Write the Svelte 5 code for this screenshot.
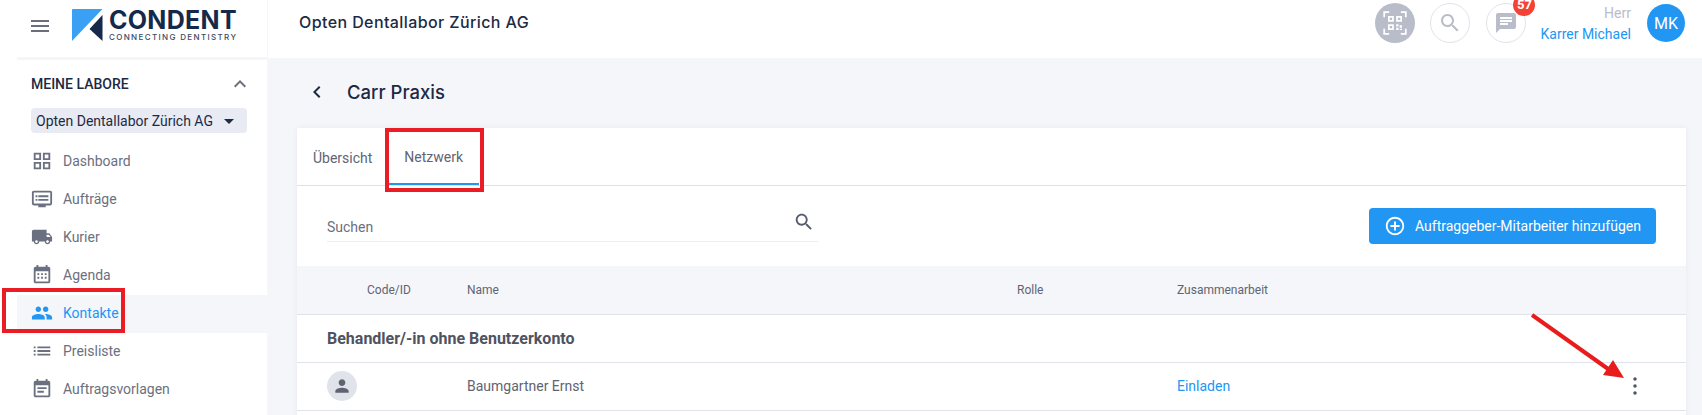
<script>
	const icons = {
		menu: 'M3 18h18v-2H3v2zm0-5h18v-2H3v2zm0-7v2h18V6H3z',
		dashboard: 'M3 3v8h8V3H3zm6 6H5V5h4v4zm-6 4v8h8v-8H3zm6 6H5v-4h4v4zm4-16v8h8V3h-8zm6 6h-4V5h4v4zm-6 4v8h8v-8h-8zm6 6h-4v-4h4v4z',
		orders: 'M21 3H3c-1.1 0-2 .9-2 2v12c0 1.1.9 2 2 2h5v2h8v-2h5c1.1 0 2-.9 2-2V5c0-1.1-.9-2-2-2zm0 14H3V5h18v12zM19 8H8v2h11V8zm0 4H8v2h11v-2zM7 8H5v2h2V8zm0 4H5v2h2v-2z',
		truck: 'M20 8h-3V4H3c-1.1 0-2 .9-2 2v11h2c0 1.66 1.34 3 3 3s3-1.34 3-3h6c0 1.66 1.34 3 3 3s3-1.34 3-3h2v-5l-3-4zM6 18.5c-.83 0-1.5-.67-1.5-1.5s.67-1.5 1.5-1.5 1.5.67 1.5 1.5-.67 1.5-1.5 1.5zm13.5-9l1.96 2.5H17V9.5h2.5zm-1.5 9c-.83 0-1.5-.67-1.5-1.5s.67-1.5 1.5-1.5 1.5.67 1.5 1.5-.67 1.5-1.5 1.5z',
		agenda: 'M19 3h-1V1h-2v2H8V1H6v2H5c-1.1 0-2 .9-2 2v14c0 1.1.9 2 2 2h14c1.1 0 2-.9 2-2V5c0-1.1-.9-2-2-2zm0 16H5V8h14v11zM7 10h2v2H7zm4 0h2v2h-2zm4 0h2v2h-2zM7 14h2v2H7zm4 0h2v2h-2zm4 0h2v2h-2z',
		people: 'M16 11c1.66 0 2.99-1.34 2.99-3S17.66 5 16 5c-1.66 0-3 1.34-3 3s1.34 3 3 3zm-8 0c1.66 0 2.99-1.34 2.99-3S9.66 5 8 5C6.34 5 5 6.34 5 8s1.34 3 3 3zm0 2c-2.33 0-7 1.17-7 3.5V19h14v-2.5c0-2.33-4.67-3.5-7-3.5zm8 0c-.29 0-.62.02-.97.05 1.16.84 1.97 1.97 1.97 3.45V19h6v-2.5c0-2.33-4.67-3.5-7-3.5z',
		list: 'M3 13h2v-2H3v2zm0 4h2v-2H3v2zm0-8h2V7H3v2zm4 4h14v-2H7v2zm0 4h14v-2H7v2zM7 7v2h14V7H7z',
		note: 'M17 10H7v2h10v-2zm2-7h-1V1h-2v2H8V1H6v2H5c-1.11 0-1.99.9-1.99 2L3 19c0 1.1.89 2 2 2h14c1.1 0 2-.9 2-2V5c0-1.1-.9-2-2-2zm0 16H5V8h14v11zm-5-5H7v2h7v-2z',
		search: 'M15.5 14h-.79l-.28-.27C15.41 12.59 16 11.11 16 9.5 16 5.91 13.09 3 9.5 3S3 5.91 3 9.5 5.91 16 9.5 16c1.61 0 3.09-.59 4.23-1.57l.27.28v.79l5 4.99L20.49 19l-4.99-5zm-6 0C7.01 14 5 11.99 5 9.5S7.01 5 9.5 5 14 7.01 14 9.5 11.99 14 9.5 14z',
		chat: 'M20 2H4c-1.1 0-1.99.9-1.99 2L2 22l4-4h14c1.1 0 2-.9 2-2V4c0-1.1-.9-2-2-2zM6 9h12v2H6V9zm8 5H6v-2h8v2zm4-6H6V6h12v2z',
		person: 'M12 12c2.21 0 4-1.79 4-4s-1.79-4-4-4-4 1.79-4 4 1.79 4 4 4zm0 2c-2.67 0-8 1.34-8 4v2h16v-2c0-2.66-5.33-4-8-4z',
		more: 'M12 3.25a1.75 1.75 0 1 0 0 3.5 1.75 1.75 0 0 0 0-3.5zm0 7a1.75 1.75 0 1 0 0 3.5 1.75 1.75 0 0 0 0-3.5zm0 7a1.75 1.75 0 1 0 0 3.5 1.75 1.75 0 0 0 0-3.5z',
		add: 'M13 7h-2v4H7v2h4v4h2v-4h4v-2h-4V7zm-1-5C6.48 2 2 6.48 2 12s4.48 10 10 10 10-4.48 10-10S17.52 2 12 2zm0 18c-4.41 0-8-3.59-8-8s3.59-8 8-8 8 3.59 8 8-3.59 8-8 8z',
		up: 'M12 8l-6 6 1.41 1.41L12 10.83l4.59 4.58L18 14z',
		back: 'M15.41 7.41L14 6l-6 6 6 6 1.41-1.41L10.83 12z',
		drop: 'M7 10l5 5 5-5z',
		qr: 'M2 2h5v1.500H3.500V7H2zm15 0h5v5h-1.500V3.500H17zM2 17h1.500v3.500H7V22H2zm18.500 0H22v5h-5v-1.500h3.500zM6 6h5v5H6zm1.500 1.500v2h2v-2zM13 6h5v5h-5zm1.500 1.500v2h2v-2zM6 13h5v5H6zm1.500 1.500v2h2v-2zM13 13h2v2h-2zm3 1h2v2h-2zm-3 2h2v2h-2zm3 1h2v1h-2z'
	};

	const nav = [
		{ label: 'Dashboard', icon: 'dashboard' },
		{ label: 'Aufträge', icon: 'orders' },
		{ label: 'Kurier', icon: 'truck' },
		{ label: 'Agenda', icon: 'agenda' },
		{ label: 'Kontakte', icon: 'people', active: true },
		{ label: 'Preisliste', icon: 'list' },
		{ label: 'Auftragsvorlagen', icon: 'note' }
	];
</script>

{#snippet icon(name, size)}
	<svg class="icon" width={size} height={size} viewBox="0 0 24 24" fill="currentColor"><path d={icons[name]} /></svg>
{/snippet}

<div class="page">
	<aside class="sidebar">
		<div class="brand">
			<span class="burger">{@render icon('menu', 24)}</span>
			<svg class="mark" width="31" height="33" viewBox="0 0 31 33">
				<path d="M1 0H30.500L0 32V1Q0 0 1 0Z" fill="#3aa0f3" />
				<path d="M30.500 6V32L17.500 20Z" fill="#15294a" />
			</svg>
			<div class="wordmark">
				<strong>CONDENT</strong>
				<small>CONNECTING DENTISTRY</small>
			</div>
		</div>

		<div class="labs">
			<div class="labs-head">
				<span>MEINE LABORE</span>
				{@render icon('up', 24)}
			</div>
			<div class="lab-select">
				<span>Opten Dentallabor Zürich AG</span>
				{@render icon('drop', 24)}
			</div>
		</div>

		<nav>
			{#each nav as item}
				<div class="nav-item" class:active={item.active}>
					{@render icon(item.icon, 22)}
					<span>{item.label}</span>
				</div>
			{/each}
		</nav>
	</aside>

	<div class="main">
		<header class="topbar">
			<span class="company">Opten Dentallabor Zürich AG</span>
			<div class="actions">
				<span class="round qr">{@render icon('qr', 28)}</span>
				<span class="round find">{@render icon('search', 24)}</span>
				<span class="round chat">
					{@render icon('chat', 24)}
					<b class="badge">57</b>
				</span>
				<div class="user">
					<span>Herr</span>
					<span class="user-name">Karrer Michael</span>
				</div>
				<span class="avatar">MK</span>
			</div>
		</header>

		<section class="content">
			<div class="title-row">
				<span class="back">{@render icon('back', 24)}</span>
				<h1>Carr Praxis</h1>
			</div>

			<div class="card">
				<div class="tabs">
					<span class="tab">Übersicht</span>
					<span class="tab current">Netzwerk</span>
				</div>

				<div class="toolbar">
					<div class="search">
						<span>Suchen</span>
						{@render icon('search', 22)}
					</div>
					<button>
						{@render icon('add', 22)}
						<span>Auftraggeber-Mitarbeiter hinzufügen</span>
					</button>
				</div>

				<div class="row table-head">
					<span></span>
					<span>Code/ID</span>
					<span>Name</span>
					<span>Rolle</span>
					<span>Zusammenarbeit</span>
					<span></span>
				</div>
				<div class="group">Behandler/-in ohne Benutzerkonto</div>
				<div class="row entry">
					<span class="person">{@render icon('person', 20)}</span>
					<span></span>
					<span>Baumgartner Ernst</span>
					<span></span>
					<span class="invite">Einladen</span>
					<span class="more">{@render icon('more', 24)}</span>
				</div>
			</div>
		</section>
	</div>

	<!-- red annotations lying over the screenshot -->
	<div class="mark-box kontakte"></div>
	<div class="mark-box netzwerk"></div>
	<svg class="arrow" width="110" height="80" viewBox="0 0 110 80">
		<path d="M1 2L80 58" stroke="#e81c1c" stroke-width="4" fill="none" />
		<path d="M93 65L72 62L82 47Z" fill="#e81c1c" />
	</svg>
</div>

<style>
	:global(body) {
		margin: 0;
		background: #fff;
	}

	.page {
		position: relative;
		display: grid;
		grid-template-columns: 267px 1fr;
		width: 1702px;
		height: 415px;
		overflow: hidden;
		font-family: Roboto, "Liberation Sans", sans-serif;
		font-size: 14px;
		color: #5f6472;
	}

	.icon {
		display: block;
		flex: none;
	}

	.sidebar {
		background: #fff;
	}

	.brand {
		display: flex;
		align-items: center;
		height: 60px;
		margin-left: 17px;
		padding: 0 0 6px 11px;
		box-sizing: border-box;
		border-bottom: 3px solid #f5f6fa;
		color: #6b6f7a;
	}

	.burger {
		margin-right: 20px;
	}

	.mark {
		margin-right: 6px;
	}

	.wordmark {
		display: flex;
		flex-direction: column;
		color: #15294a;
		font-family: Inter, sans-serif;
	}

	.wordmark strong {
		font-size: 25px;
		line-height: 24px;
		font-weight: 700;
		letter-spacing: 0.3px;
	}

	.wordmark small {
		font-size: 8px;
		line-height: 11px;
		letter-spacing: 1.35px;
		font-weight: 500;
		color: #3c4a63;
	}

	.labs {
		padding: 12px 20px 0 31px;
	}

	.labs-head {
		display: flex;
		align-items: center;
		justify-content: space-between;
		height: 24px;
		color: #1d2a44;
		font-weight: 500;
		font-size: 14px;
	}

	.labs-head .icon {
		color: #6b6f7a;
		margin-right: -5px;
	}

	.lab-select {
		display: flex;
		align-items: center;
		justify-content: space-between;
		height: 25px;
		margin-top: 12px;
		padding: 0 6px 0 5px;
		background: #e8ebf3;
		border-radius: 4px;
		color: #1d2a44;
		font-size: 14px;
	}

	nav {
		margin-top: 10px;
		margin-left: 17px;
	}

	.nav-item {
		display: flex;
		align-items: center;
		gap: 10px;
		height: 38px;
		padding: 0 0 2px 14px;
		box-sizing: border-box;
		color: #6b7080;
	}

	.nav-item.active {
		background: #f5f6fa;
		color: #2196f3;
	}

	.main {
		display: flex;
		flex-direction: column;
		min-width: 0;
	}

	.topbar {
		display: flex;
		align-items: center;
		justify-content: space-between;
		height: 58px;
		padding: 0 17px 12px 31px;
		box-sizing: border-box;
		border-left: 1px solid #f5f6fa;
		background: #fff;
	}

	.company {
		font-family: Inter, sans-serif;
		font-size: 16px;
		font-weight: 500;
		letter-spacing: 0.4px;
		color: #1d2a44;
		padding-bottom: 2px;
	}

	.actions {
		display: flex;
		align-items: center;
	}

	.round {
		position: relative;
		display: flex;
		align-items: center;
		justify-content: center;
		width: 40px;
		height: 40px;
		margin-right: 16px;
		box-sizing: border-box;
		border: 1px solid #e1e3ea;
		border-radius: 50%;
		color: #b9bdca;
	}

	.round.qr {
		background: #b9bdca;
		color: #fff;
		border: 0;
		margin-right: 15px;
	}

	.round.chat {
		margin-right: 14px;
	}

	.badge {
		position: absolute;
		top: -10px;
		right: -10px;
		width: 22px;
		height: 22px;
		border-radius: 50%;
		background: #f44336;
		color: #fff;
		font-size: 13px;
		line-height: 22px;
		text-align: center;
		font-weight: 700;
	}

	.user {
		display: flex;
		flex-direction: column;
		align-items: flex-end;
		gap: 5px;
		line-height: 16px;
		color: #b9bdca;
		margin-right: 16px;
	}

	.user-name {
		color: #2196f3;
	}

	.avatar {
		display: flex;
		align-items: center;
		justify-content: center;
		width: 38px;
		height: 38px;
		border-radius: 50%;
		background: #2196f3;
		color: #fff;
		font-size: 16px;
	}

	.content {
		flex: 1;
		background: #f5f6fa;
		padding: 0 16px 0 30px;
	}

	.title-row {
		display: flex;
		align-items: center;
		height: 70px;
		padding: 0 0 2px 8px;
		box-sizing: border-box;
		gap: 18px;
		color: #1d2a44;
	}

	h1 {
		margin: 0;
		font-family: Inter, sans-serif;
		font-size: 18.5px;
		font-weight: 500;
		color: #1d2a44;
	}

	.card {
		min-height: 300px;
		background: #fff;
		box-shadow: 0 0 6px rgba(30, 40, 70, 0.06);
	}

	.tabs {
		display: flex;
		height: 58px;
		padding-left: 16px;
		box-sizing: border-box;
		border-bottom: 1px solid #dfe1e6;
	}

	.tab {
		display: flex;
		align-items: center;
		margin-right: 16px;
		padding-top: 2px;
		box-sizing: border-box;
	}

	.tab.current {
		padding: 2px 16px 0;
		border-bottom: 2px solid #2196f3;
		height: 57px;
	}

	.toolbar {
		display: flex;
		justify-content: space-between;
		height: 80px;
		padding: 22px 30px 0 30px;
		box-sizing: border-box;
	}

	.search {
		display: flex;
		justify-content: space-between;
		align-items: flex-start;
		width: 491px;
		height: 34px;
		padding-top: 4px;
		box-sizing: border-box;
		border-bottom: 1px solid #eceef1;
		line-height: 30px;
		color: #6b7080;
	}

	.search .icon {
		color: #555b6b;
		margin: -1px 3px 0 0;
	}

	button {
		display: flex;
		align-items: center;
		gap: 9px;
		width: 287px;
		height: 36px;
		padding: 0 15px;
		border: 0;
		border-radius: 4px;
		background: #2196f3;
		color: #fff;
		font: 14px Roboto, sans-serif;
		white-space: nowrap;
	}

	.row {
		display: grid;
		grid-template-columns: 70px 100px 550px 160px 1fr 63px;
		align-items: center;
	}

	.table-head {
		height: 49px;
		padding-bottom: 1px;
		background: #f5f6fa;
		border-bottom: 1px solid #e1e3ea;
		box-sizing: border-box;
		font-size: 12px;
	}

	.group {
		display: flex;
		align-items: center;
		height: 48px;
		padding: 0 0 1px 30px;
		box-sizing: border-box;
		border-bottom: 1px solid #e1e3ea;
		font-size: 16px;
		font-weight: 700;
		color: #50535f;
	}

	.entry {
		height: 48px;
		padding-bottom: 1px;
		box-sizing: border-box;
		border-bottom: 1px solid #e1e3ea;
	}

	.person {
		display: flex;
		align-items: center;
		justify-content: center;
		width: 30px;
		height: 30px;
		margin-left: 30px;
		border-radius: 50%;
		background: #e1e3ea;
		color: #5f6472;
	}

	.invite {
		color: #2196f3;
	}

	.more {
		color: #4b5468;
	}

	.mark-box {
		position: absolute;
		box-sizing: border-box;
		border: 4px solid #ea1c24;
	}

	.kontakte {
		left: 2px;
		top: 288px;
		width: 123px;
		height: 45px;
	}

	.netzwerk {
		left: 385px;
		top: 128px;
		width: 99px;
		height: 64px;
	}

	.arrow {
		position: absolute;
		left: 1531px;
		top: 313px;
	}
</style>
